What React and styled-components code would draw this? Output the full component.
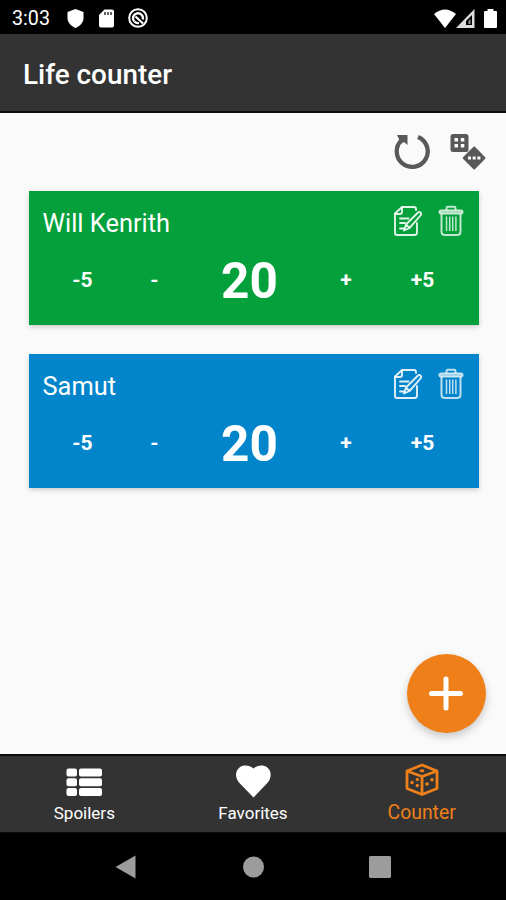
import styled, { createGlobalStyle } from "styled-components";

const colors = {
  bar: "#333333",
  page: "#fafafa",
  green: "#03a03c",
  blue: "#0385cb",
  orange: "#ef8019",
  tool: "#595959",
  system: "#9c9c9c",
};

const GlobalStyle = createGlobalStyle`
  body {
    margin: 0;
    font-family: Roboto, "Noto Sans", sans-serif;
  }

  svg {
    display: block;
    flex: none;
  }
`;

const Screen = styled.div`
  width: 506px;
  height: 900px;
  display: flex;
  flex-direction: column;
  overflow: hidden;
  background: ${colors.page};
`;

const StatusBar = styled.header`
  height: 34px;
  flex: none;
  box-sizing: border-box;
  padding: 2px 9px 0 12px;
  display: flex;
  align-items: center;
  background: #000;
  color: #fff;
`;

const Time = styled.span`
  width: 55px;
  font-size: 19.7px;
  line-height: 32px;
  padding-top: 1px;
`;

const StatusGroup = styled.div`
  display: flex;
  align-items: center;
  gap: ${(props) => props.$gap}px;
  margin-left: ${(props) => (props.$end ? "auto" : 0)};
`;

const TitleBar = styled.div`
  height: 79px;
  flex: none;
  box-sizing: border-box;
  padding: 5px 0 0 23px;
  display: flex;
  align-items: center;
  background: ${colors.bar};
  border-bottom: 2px solid #0c0c0c;
`;

const Title = styled.h1`
  margin: 0;
  color: #fff;
  font-size: 27.9px;
  font-weight: 500;
  line-height: 32px;
`;

const Content = styled.main`
  flex: 1;
  box-sizing: border-box;
  padding: 20px 20px 0 28.5px;
  display: flex;
  flex-direction: column;
`;

const Toolbar = styled.div`
  display: flex;
  justify-content: flex-end;
  gap: 18.5px;
  height: 37px;
  margin-bottom: 20.5px;
`;

const Card = styled.section`
  width: 450px;
  height: 134.5px;
  margin-bottom: 28.5px;
  box-sizing: border-box;
  padding: 14.5px 14px 0;
  background: ${(props) => props.$color};
  color: #fff;
  box-shadow: 0 2px 5px rgba(0, 0, 0, 0.18);
`;

const CardHead = styled.div`
  display: flex;
  justify-content: space-between;
  height: 36px;
`;

const Player = styled.h2`
  margin: 0;
  font-size: 25.4px;
  font-weight: 400;
  line-height: 36px;
`;

const CardActions = styled.div`
  display: flex;
  gap: 15px;
  margin-right: 1px;
`;

const Counter = styled.div`
  display: grid;
  grid-template-columns: 80px 64px 126px 67px 86px;
  align-items: center;
  justify-items: center;
  height: 79px;
`;

const Step = styled.span`
  font-size: 21px;
  font-weight: 700;
  line-height: 24px;
  margin-top: -1px;
`;

const Life = styled.span`
  font-size: 49.5px;
  font-weight: 700;
  line-height: 56px;
`;

const AddButton = styled.div`
  width: 79px;
  height: 79px;
  margin: auto 0 21px auto;
  border-radius: 50%;
  display: flex;
  align-items: center;
  justify-content: center;
  background: ${colors.orange};
  box-shadow: 0 4px 9px rgba(0, 0, 0, 0.2);
`;

const TabBar = styled.nav`
  height: 79px;
  flex: none;
  box-sizing: border-box;
  border-top: 2px solid #0c0c0c;
  border-bottom: 1px solid #0c0c0c;
  display: grid;
  grid-template-columns: repeat(3, 1fr);
  background: ${colors.bar};
`;

const Tab = styled.div`
  display: flex;
  flex-direction: column;
  align-items: center;
  padding-top: ${(props) => (props.$active ? 6 : 7)}px;
  color: ${(props) => (props.$active ? colors.orange : "#fff")};
`;

const TabLabel = styled.span`
  font-size: ${(props) => (props.$active ? 19.4 : 17)}px;
  line-height: 22px;
  margin-top: ${(props) => (props.$active ? 4 : 3)}px;
`;

const SystemNav = styled.footer`
  height: 67px;
  flex: none;
  display: flex;
  justify-content: center;
  align-items: center;
  gap: 105px;
  background: #000;
`;

function ShieldIcon() {
  return (
    <svg width="17" height="19" viewBox="0 0 17 19" fill="#fff">
      <path d="M8.500 0 16.500 3v6c0 4.500-3.500 8-8 10C4 17 .5 13.500.5 9V3Z" />
    </svg>
  );
}

function SdIcon() {
  return (
    <svg width="15" height="19" viewBox="0 0 15 19">
      <path fill="#fff" d="M5.500.5H13q2 0 2 2v14q0 2-2 2H2q-2 0-2-2V6Z" />
      <path stroke="#333" strokeWidth="1.500" d="M6 3v3M9 3v3M12 3v3" />
    </svg>
  );
}

function BlockedIcon() {
  return (
    <svg width="20" height="20" viewBox="0 0 20 20" fill="none" stroke="#fff">
      <circle cx="10" cy="10" r="8.800" strokeWidth="2" />
      <path strokeWidth="2.400" d="M6.200 13.500A5 5 0 1 1 14.800 11.500" />
      <path strokeWidth="2.200" d="m7.500 8.500 7.500 7M6.500 13.500q1.500 2 4.500 1.500" />
    </svg>
  );
}

function WifiIcon() {
  return (
    <svg width="22" height="19" viewBox="0 0 22 19" fill="#fff">
      <path d="M0 5Q11-4 22 5L11 19Z" />
    </svg>
  );
}

function SignalIcon() {
  return (
    <svg width="19" height="19" viewBox="0 0 19 19">
      <path fill="#ddd" d="M18.500 0v19H0Z" />
      <path fill="#000" d="M16 6V16h-6V12Z" />
      <path fill="#999" d="M12.500 12 14.500 10v5h-2Z" />
    </svg>
  );
}

function BatteryIcon() {
  return (
    <svg width="13" height="19" viewBox="0 0 13 19" fill="#fff">
      <path d="M3.500 0h6v2H12q1 0 1 1v15q0 1-1 1H1q-1 0-1-1V3q0-1 1-1h2.500Z" />
    </svg>
  );
}

function ResetIcon() {
  return (
    <svg width="37" height="37" viewBox="0 0 37 37">
      <path
        fill="none"
        stroke={colors.tool}
        strokeWidth="4.300"
        d="M24 4A15.500 15.500 0 1 1 7.500 7.200"
      />
      <path fill={colors.tool} d="M3 2H13.500v10l-3.500-3-3.500 2-1-4Z" />
    </svg>
  );
}

function DicePairIcon() {
  return (
    <svg width="37" height="37" viewBox="0 0 37 37">
      <rect x="1.500" y="1" width="18" height="18" rx="2.500" fill={colors.tool} />
      <path
        fill="#fafafa"
        d="M5.500 5H9v3.500H5.500zM11.800 5h3.500v3.500h-3.500zM5.500 11H9v3.500H5.500zM11.800 11h3.500v3.500h-3.500z"
      />
      <path
        fill={colors.tool}
        stroke={colors.tool}
        strokeWidth="2"
        strokeLinejoin="round"
        d="m25.200 14.500 10.300 10.500-10.300 10.500L14.700 25Z"
      />
      <path fill="#fafafa" d="M19 23.500h3v3h-3zM23.700 23.500h3v3h-3zM28.400 23.500h3v3h-3z" />
    </svg>
  );
}

function EditIcon() {
  return (
    <svg
      width="30"
      height="32"
      viewBox="0 0 30 32"
      fill="none"
      stroke="#fff"
      strokeOpacity="0.88"
      strokeWidth="1.900"
      strokeLinejoin="round"
      strokeLinecap="round"
    >
      <path d="M23 5V4q0-2-2-2H9L2 8.500V28q0 2 2 2h17.500q2.500 0 2.500-2.500V18" />
      <path d="M2.500 9H7q2 0 2-2V2.500M7 13.500H15.500M7 18H12M7 23.500h4" />
      <path d="m11 25.500 2-6L25 7.500q1.300-1 2.500 0 1.300 1.500 0 3L16.500 23ZM13 19.500l3.500 3.500" />
    </svg>
  );
}

function TrashIcon() {
  return (
    <svg
      width="26"
      height="32"
      viewBox="0 0 26 32"
      fill="none"
      stroke="#fff"
      strokeOpacity="0.75"
      strokeWidth="2"
      strokeLinejoin="round"
    >
      <rect x="1.500" y="5.500" width="23" height="3" rx="1.500" fill="#fff" fillOpacity="0.45" />
      <path d="M8.500 5V3q0-1.300 1.500-1.300h6q1.500 0 1.500 1.300v2M3.500 9v17.500q0 3.500 3.500 3.500h12q3.500 0 3.500-3.500V9" />
      <path d="M8.500 11.500V26M11.700 11.500V26M14.700 11.500V26M17.900 11.500V26" strokeWidth="1.500" />
    </svg>
  );
}

function PlusIcon() {
  return (
    <svg width="35" height="35" viewBox="0 0 35 35">
      <path
        stroke="#fff"
        strokeWidth="5"
        strokeLinecap="round"
        d="M17 3v29M2.500 17.500h29"
      />
    </svg>
  );
}

function ListIcon() {
  return (
    <svg width="36" height="36" viewBox="0 0 36 36" fill="#fff">
      {[5.5, 15.2, 24.9].map((y) => (
        <g key={y}>
          <rect x="0.5" y={y} width="10.500" height="8" rx="2" />
          <rect x="13" y={y} width="23" height="8" rx="2" />
        </g>
      ))}
    </svg>
  );
}

function HeartIcon() {
  return (
    <svg width="36" height="36" viewBox="0 0 36 36" fill="#fff">
      <path d="M18.500 34.500 4 19.500C-.5 14 .5 7.500 4.500 4.500 8.500 1.200 15 2.500 18.500 5.500 22 2.500 28 1.200 32.300 4.500c4 3 4.700 9.500.5 15Z" />
    </svg>
  );
}

function DieIcon() {
  return (
    <svg width="36" height="36" viewBox="0 0 36 36" fill="none" stroke="currentColor">
      <path
        strokeWidth="2.800"
        strokeLinejoin="round"
        d="m18 3 15 6v17.500L18 32.500 3 26.500V9ZM3 9l15 5.500L33 9M18 14.500V32.500"
      />
      <g fill="currentColor" stroke="none">
        <ellipse cx="18" cy="8.800" rx="2.500" ry="1.500" />
        <circle cx="13.300" cy="17.500" r="1.700" />
        <circle cx="8" cy="20.500" r="1.700" />
        <circle cx="13.300" cy="23.500" r="1.700" />
        <circle cx="23" cy="22" r="1.800" />
        <circle cx="28" cy="17.800" r="1.800" />
      </g>
    </svg>
  );
}

const players = [
  { name: "Will Kenrith", life: 20, color: colors.green },
  { name: "Samut", life: 20, color: colors.blue },
];

const tabs = [
  { label: "Spoilers", Icon: ListIcon },
  { label: "Favorites", Icon: HeartIcon },
  { label: "Counter", Icon: DieIcon, active: true },
];

function PlayerCard({ name, life, color }) {
  return (
    <Card $color={color}>
      <CardHead>
        <Player>{name}</Player>
        <CardActions>
          <EditIcon />
          <TrashIcon />
        </CardActions>
      </CardHead>
      <Counter>
        <Step>-5</Step>
        <Step>-</Step>
        <Life>{life}</Life>
        <Step>+</Step>
        <Step>+5</Step>
      </Counter>
    </Card>
  );
}

function App() {
  return (
    <Screen>
      <GlobalStyle />
      <StatusBar>
        <Time>3:03</Time>
        <StatusGroup $gap={14.5}>
          <ShieldIcon />
          <SdIcon />
          <BlockedIcon />
        </StatusGroup>
        <StatusGroup $gap={9} $end>
          <StatusGroup $gap={0}>
            <WifiIcon />
            <SignalIcon />
          </StatusGroup>
          <BatteryIcon />
        </StatusGroup>
      </StatusBar>
      <TitleBar>
        <Title>Life counter</Title>
      </TitleBar>
      <Content>
        <Toolbar>
          <ResetIcon />
          <DicePairIcon />
        </Toolbar>
        {players.map((player) => (
          <PlayerCard key={player.name} {...player} />
        ))}
        <AddButton>
          <PlusIcon />
        </AddButton>
      </Content>
      <TabBar>
        {tabs.map(({ label, Icon, active }) => (
          <Tab key={label} $active={active}>
            <Icon />
            <TabLabel $active={active}>{label}</TabLabel>
          </Tab>
        ))}
      </TabBar>
      <SystemNav>
        <svg width="22" height="24" viewBox="0 0 22 24">
          <path fill={colors.system} d="M20.500.5v23L.5 12Z" />
        </svg>
        <svg width="22" height="22" viewBox="0 0 22 22">
          <circle cx="11.500" cy="11" r="10.500" fill={colors.system} />
        </svg>
        <svg width="22" height="22" viewBox="0 0 22 22">
          <rect width="22" height="22" rx="1.500" fill={colors.system} />
        </svg>
      </SystemNav>
    </Screen>
  );
}

export default App;
